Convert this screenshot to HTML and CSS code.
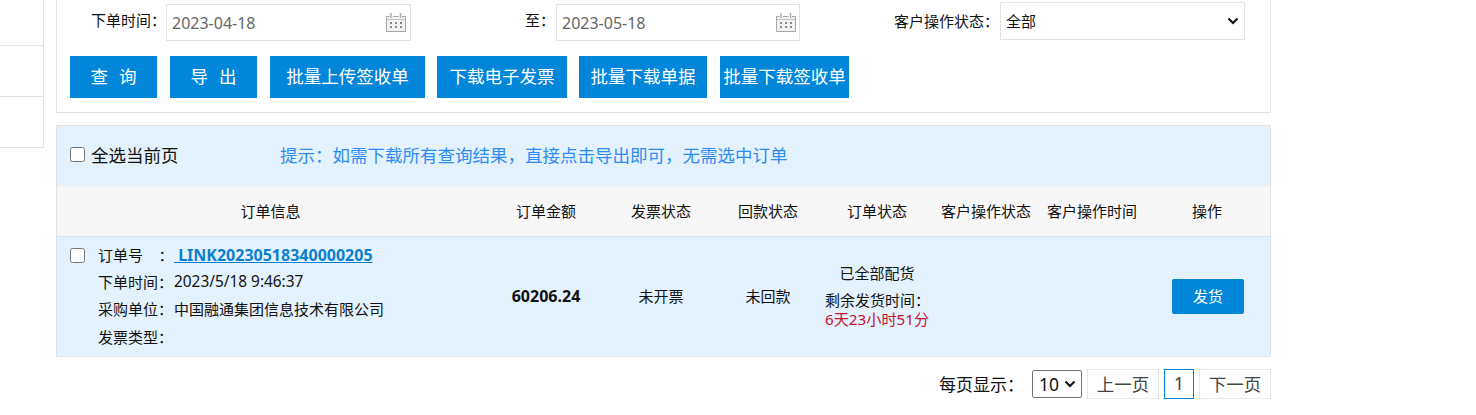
FILE: index.html
```html
<!DOCTYPE html>
<html lang="zh-CN">
<head>
<meta charset="utf-8">
<title>订单查询</title>
<link rel="stylesheet" href="styles.css">
</head>
<body>
<svg class="defs" width="0" height="0" aria-hidden="true">
  <symbol id="cal" viewBox="0 0 20 20">
    <path d="M.5 4.500h3M7 4.500h5.500M16 4.500h3.500V19.500H.5V4.500" fill="#f2f2f2" stroke="#a6a6a6"/>
    <path d="M5 1v5M14.500 1v5" stroke="#b0b0b0" stroke-width="1.500" fill="none"/>
    <path d="M1 7.500h18" stroke="#c4c4c4"/>
    <path d="M4 10h2v2H4zM9 10h2v2H9zM14 10h2v2h-2zM4 14h2v2H4zM9 14h2v2H9zM14 14h2v2h-2z" fill="#8a8a8a"/>
  </symbol>
</svg>
<div class="page">
  <aside class="side">
    <div class="side-item"></div>
    <div class="side-item"></div>
    <div class="side-item"></div>
  </aside>
  <main class="main">
    <section class="filter">
      <div class="filter-row">
        <div class="field field-start">
          <label class="field-label">下单时间：</label>
          <div class="date-box"><span>2023-04-18</span><svg class="cal-icon"><use href="#cal"/></svg></div>
        </div>
        <div class="field field-end">
          <label class="field-label">至：</label>
          <div class="date-box"><span>2023-05-18</span><svg class="cal-icon"><use href="#cal"/></svg></div>
        </div>
        <div class="field field-status">
          <label class="field-label">客户操作状态：</label>
          <select class="status-select"><option>全部</option></select>
        </div>
      </div>
      <div class="btn-row">
        <button class="btn btn-short">查 询</button>
        <button class="btn btn-short">导 出</button>
        <button class="btn btn-upload">批量上传签收单</button>
        <button class="btn btn-invoice">下载电子发票</button>
        <button class="btn btn-docs">批量下载单据</button>
        <button class="btn btn-receipt">批量下载签收单</button>
      </div>
    </section>

    <section class="orders">
      <div class="select-bar">
        <label class="select-all"><input type="checkbox" class="check"><span>全选当前页</span></label>
        <span class="hint">提示：如需下载所有查询结果，直接点击导出即可，无需选中订单</span>
      </div>
      <div class="grid grid-head">
        <div>订单信息</div><div>订单金额</div><div>发票状态</div><div>回款状态</div>
        <div>订单状态</div><div>客户操作状态</div><div>客户操作时间</div><div>操作</div>
      </div>
      <div class="grid grid-row">
        <div class="info">
          <input type="checkbox" class="check check-row">
          <dl class="info-list">
            <div class="info-line"><dt>订单号&nbsp;&nbsp;&nbsp;&nbsp;：</dt><dd><a class="order-link" href="#">&nbsp;LINK20230518340000205</a></dd></div>
            <div class="info-line"><dt>下单时间：</dt><dd class="latin">2023/5/18 9:46:37</dd></div>
            <div class="info-line"><dt>采购单位：</dt><dd>中国融通集团信息技术有限公司</dd></div>
            <div class="info-line info-last"><dt>发票类型：</dt><dd></dd></div>
          </dl>
        </div>
        <div class="amount mid">60206.24</div>
        <div class="mid">未开票</div>
        <div class="mid">未回款</div>
        <div class="state">
          <div class="state-main">已全部配货</div>
          <div class="state-left">
            <div>剩余发货时间：</div>
            <div class="remain">6天23小时51分</div>
          </div>
        </div>
        <div></div>
        <div></div>
        <div><button class="ship">发货</button></div>
      </div>
    </section>

    <nav class="pager">
      <span class="pager-label">每页显示：</span>
      <select class="size-select"><option>10</option></select>
      <a class="page-btn page-wide">上一页</a>
      <a class="page-btn page-current">1</a>
      <a class="page-btn page-wide">下一页</a>
    </nav>
  </main>
</div>
</body>
</html>
```
FILE: styles.css
```css
* { box-sizing: border-box; }
html, body { margin: 0; height: 415px; overflow: hidden; background: #fff; }
body { font-family: "Noto Sans", "Noto Sans CJK SC", sans-serif; font-size: 15px; color: #111; }
.defs { position: absolute; }
.page { display: flex; align-items: flex-start; }

.side { width: 44px; margin-right: 12px; border-right: 1px solid #e2e2e2; flex: none; }
.side-item { height: 51px; border-bottom: 1px solid #e2e2e2; }
.side-item:first-child { height: 46px; }

.main { width: 1215px; flex: none; }

.filter { height: 113px; border: 1px solid #e2e2e2; border-top: 0; padding: 2px 0 0 13px; }
.filter-row { display: flex; height: 39px; }
.field { display: flex; align-items: flex-start; }
.field-label { font-size: 15px; line-height: 20px; padding-top: 8px; white-space: nowrap; }
.field-start { width: 390px; padding-left: 21px; }
.field-start .field-label { width: 75px; }
.field-end { width: 425px; padding-left: 65px; }
.field-end .field-label { width: 31px; }
.field-end .date-box { width: 244px; padding-right: 3px; }
.field-status { padding-left: 9px; }
.field-status .field-label { width: 106px; padding-top: 9px; }

.date-box { width: 245px; height: 37px; margin-top: 2px; border: 1px solid #e2e2e2; background: #fff; padding: 0 4px 0 5px; display: flex; align-items: center; justify-content: space-between; font-size: 16px; color: #666; }
.cal-icon { width: 20px; height: 20px; margin-bottom: 2px; }
.status-select { appearance: none; width: 245px; height: 38px; border: 1px solid #e2e2e2; border-radius: 0; padding: 0 0 0 5px; font: inherit; font-size: 15px; color: #111; background: #fff url("data:image/svg+xml,%3Csvg xmlns='http://www.w3.org/2000/svg' width='12' height='8'%3E%3Cpath d='M1.500 1.500 6 6l4.500-4.500' fill='none' stroke='%23111' stroke-width='2'/%3E%3C/svg%3E") no-repeat right 5px center; }

.btn-row { display: flex; margin-top: 15px; }
.btn { height: 42px; border: 0; background: #0286d9; color: #fff; font: inherit; font-size: 17.500px; line-height: 38px; padding: 0 0 3px; margin-right: 13px; white-space: pre; }
.btn-short { width: 87px; word-spacing: 6.500px; }
.btn-upload { width: 155px; margin-right: 12px; }
.btn-invoice { width: 130px; margin-right: 12px; }
.btn-docs { width: 128px; }
.btn-receipt { width: 129px; margin-right: 0; }

.orders { margin-top: 12px; border: 1px solid #e2e2e2; background: #e3f2fd; }
.select-bar { height: 59px; display: flex; align-items: center; padding: 0 0 2px 13px; }
.select-all { display: flex; align-items: center; width: 210px; font-size: 17.500px; }
.select-all span { margin-left: 6px; }
.check { width: 15px; height: 15px; margin: 0; }
.hint { font-size: 17.500px; color: #2d8cf0; }

.grid { display: grid; grid-template-columns: 427px 124px 106px 108px 110px 108px 104px 126px; }
.grid > div { display: flex; align-items: center; justify-content: center; text-align: center; }
.grid-head { height: 52px; padding-bottom: 2px; background: #f7f7f7; border-top: 1px solid #ececec; border-bottom: 1px solid #e2e2e2; }
.grid-row { height: 119px; }
.grid > .mid { padding-bottom: 2px; }
.grid > .info { justify-content: flex-start; align-items: flex-start; padding: 4px 0 0 13px; text-align: left; }
.check-row { margin-top: 7px; }
.info-list { margin: 0 0 0 13px; }
.info-line { display: flex; height: 27px; align-items: center; white-space: nowrap; }
.info-last { margin-top: 1px; }
.info-line dt { width: 76px; }
.info-line dd { margin: 0; }
.latin { font-size: 15.400px; }
.order-link { color: #0b7fd0; font-weight: 700; text-decoration: underline; font-size: 16px; }
.grid > .amount { font-weight: 700; font-size: 16px; }
.grid > .state { flex-direction: column; align-items: flex-start; justify-content: flex-start; padding: 25px 0 0 3px; }
.state-main { width: 104px; text-align: center; }
.state-left { margin-top: 8px; text-align: left; line-height: 19px; }
.remain { color: #c8102e; white-space: nowrap; font-size: 15.200px; }
.ship { width: 72px; height: 35px; margin-left: 2px; border: 0; border-radius: 2px; background: #0286d9; color: #fff; font: inherit; padding: 0 0 2px; }

.pager { display: flex; justify-content: flex-end; align-items: center; margin-top: 12px; height: 30px; font-size: 17.500px; }
.pager-label { margin-right: 8px; font-size: 17px; padding-bottom: 2px; }
.size-select { appearance: none; width: 50px; height: 28px; margin-right: 5px; border: 1px solid #767676; border-radius: 2px; padding: 0 0 0 6px; font: inherit; color: #111; background: #fff url("data:image/svg+xml,%3Csvg xmlns='http://www.w3.org/2000/svg' width='12' height='8'%3E%3Cpath d='M1.500 1.500 6 6l4.500-4.500' fill='none' stroke='%23111' stroke-width='2'/%3E%3C/svg%3E") no-repeat right 5px center; }
.page-btn { height: 30px; display: flex; align-items: center; justify-content: center; border: 1px solid #e8e8e8; color: #444; padding-bottom: 2px; }
.page-wide { width: 72px; }
.page-current { width: 30px; margin: 0 5px; border-color: #0286d9; }
```
